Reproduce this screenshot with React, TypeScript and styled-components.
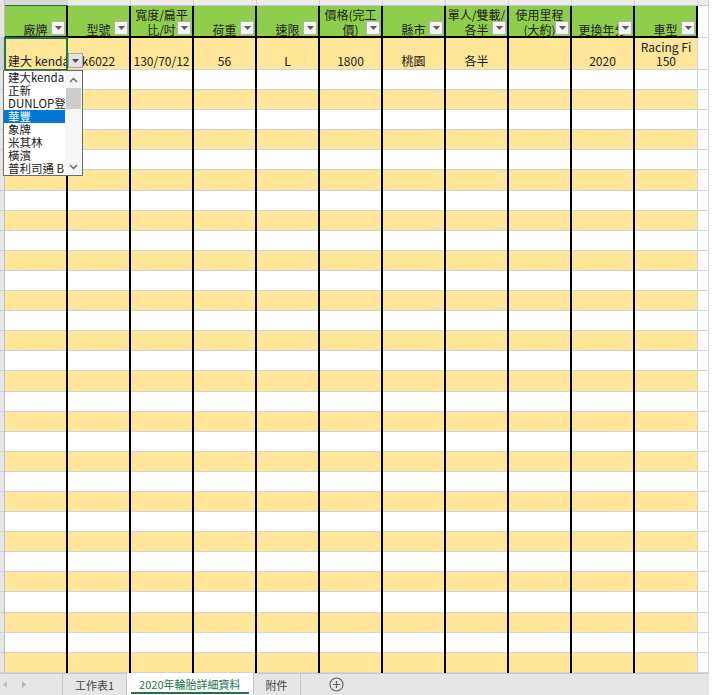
import React from "react";
import styled, { createGlobalStyle } from "styled-components";

const GlobalStyle = createGlobalStyle`
  html, body {
    margin: 0;
    padding: 0;
    background: #ffffff;
  }
  body {
    font-family: "Noto Sans CJK TC", "Liberation Sans", sans-serif;
    font-size: 12px;
    color: #1a1a1a;
  }
`;

const GREEN = "#8fce4c";
const YELLOW = "#ffe699";
const GRID = "#d4d4d4";

const Sheet = styled.div`
  width: 709px;
  height: 695px;
  display: flex;
  flex-direction: column;
  overflow: hidden;
`;

const Grid = styled.div`
  flex: 1;
  overflow: hidden;
  display: flex;
  flex-direction: column;
`;

const Row = styled.div<{ $h: number }>`
  display: flex;
  flex: none;
  height: ${(p) => p.$h}px;
`;

const RowHead = styled.div<{ $active?: boolean }>`
  flex: none;
  width: 5px;
  box-sizing: border-box;
  background: ${(p) => (p.$active ? "#d3d3d3" : "#e6e6e6")};
  border-right: 1px solid ${(p) => (p.$active ? "#217346" : "#c2c2c2")};
  box-shadow: inset 0 -1px 0 #d0d0d0;
`;

const ColHead = styled.div<{ $active?: boolean; $w?: number }>`
  flex: none;
  width: ${(p) => p.$w ?? 63}px;
  box-sizing: border-box;
  background: ${(p) => (p.$active ? "#d8d8d8" : "#ececec")};
  border-right: 1px solid #d2d2d2;
  border-bottom: 1px solid ${(p) => (p.$active ? "#217346" : "#c6c6c6")};
`;

const HeadCell = styled.div`
  flex: none;
  position: relative;
  width: 63px;
  box-sizing: border-box;
  background: ${GREEN};
  border-right: 2px solid #000;
  border-bottom: 2px solid #000;
  display: flex;
  flex-direction: column;
  justify-content: flex-end;
  align-items: center;
  overflow: hidden;
  line-height: 15px;
  text-align: center;
  white-space: nowrap;
  color: #1c1c1c;
`;

const HeadLine = styled.span`
  display: block;

  &:nth-last-child(2) {
    margin-bottom: -1px;
  }
`;

const FilterButton = styled.div`
  position: absolute;
  right: 1px;
  bottom: 1px;
  width: 14px;
  height: 14px;
  box-sizing: border-box;
  background: #f4f4f4;
  border: 1px solid #b4b4b4;
  display: flex;
  align-items: center;
  justify-content: center;
`;

const DataCell = styled.div<{ $fill: string; $last?: boolean; $align?: string; $sel?: boolean }>`
  flex: none;
  position: relative;
  width: 63px;
  box-sizing: border-box;
  background: ${(p) => p.$fill};
  border-right: ${(p) => (p.$last ? `1px solid ${GRID}` : "2px solid #000")};
  box-shadow: inset 0 -1px 0 ${GRID};
  display: flex;
  flex-direction: column;
  justify-content: flex-end;
  align-items: ${(p) => (p.$align === "left" ? "flex-start" : "center")};
  padding: 0 0 2px ${(p) => (p.$align === "left" ? "3px" : "0")};
  line-height: 14px;
  white-space: nowrap;
  z-index: ${(p) => (p.$sel ? 5 : "auto")};

  ${(p) =>
    p.$sel &&
    `
    &::after {
      content: "";
      position: absolute;
      left: -1px;
      top: -1px;
      right: -2px;
      bottom: -1px;
      border: 2px solid #217346;
      pointer-events: none;
    }
  `}
`;

const SpareCell = styled.div`
  flex: none;
  width: 11px;
  box-sizing: border-box;
  background: #fff;
  border-right: 1px solid ${GRID};
  box-shadow: inset 0 -1px 0 ${GRID};
`;

const CellButton = styled.div`
  position: absolute;
  left: 63px;
  top: 15px;
  width: 15px;
  height: 15px;
  box-sizing: border-box;
  background: #e3e3e3;
  border: 1px solid #a9a9a9;
  display: flex;
  align-items: center;
  justify-content: center;
  z-index: 6;
`;

const ListBox = styled.div`
  position: absolute;
  left: -2px;
  top: 32px;
  width: 80px;
  height: 106px;
  box-sizing: border-box;
  background: #fff;
  border: 1px solid #6b6b6b;
  display: flex;
  z-index: 7;
`;

const ListItems = styled.div`
  flex: 1;
  min-width: 0;
  display: flex;
  flex-direction: column;
`;

const ListItem = styled.div<{ $on?: boolean }>`
  height: 13px;
  line-height: 13px;
  font-size: 11.5px;
  padding-left: 4px;
  white-space: nowrap;
  overflow: hidden;
  color: ${(p) => (p.$on ? "#ffffff" : "#1a1a1a")};
  background: ${(p) => (p.$on ? "#0078d7" : "transparent")};
`;

const ScrollBar = styled.div`
  flex: none;
  width: 17px;
  display: flex;
  flex-direction: column;
  align-items: center;
  background: #f7f7f7;
`;

const ScrollArrow = styled.div`
  height: 17px;
  display: flex;
  align-items: center;
  justify-content: center;
`;

const ScrollThumb = styled.div`
  width: 15px;
  height: 21px;
  background: #cdcdcd;
`;

const ScrollTrack = styled.div`
  flex: 1;
`;

const TabBar = styled.div`
  flex: none;
  height: 22px;
  box-sizing: border-box;
  background: #e6e6e6;
  border-top: 1px solid #c8c8c8;
  display: flex;
  align-items: stretch;
  font-size: 11px;
`;

const TabNav = styled.div`
  flex: none;
  width: 63px;
  box-sizing: border-box;
  border-right: 1px solid #c6c6c6;
  display: flex;
  align-items: center;
  gap: 15px;
  padding-left: 3px;
`;

const Tab = styled.div<{ $active?: boolean }>`
  flex: none;
  position: relative;
  box-sizing: border-box;
  padding: 0 12px;
  display: flex;
  align-items: center;
  color: ${(p) => (p.$active ? "#217346" : "#444444")};
  background: ${(p) => (p.$active ? "#ffffff" : "transparent")};
  border-right: 1px solid #c6c6c6;
  margin-top: ${(p) => (p.$active ? "-1px" : "0")};

  ${(p) =>
    p.$active &&
    `
    &::after {
      content: "";
      position: absolute;
      left: 4px;
      right: 4px;
      bottom: 1px;
      height: 2px;
      background: #217346;
    }
  `}
`;

const AddSheet = styled.div`
  margin-left: 28px;
  display: flex;
  align-items: center;
`;

const Caret = ({ color = "#5a5a5a" }: { color?: string }) => (
  <svg width="7" height="4" viewBox="0 0 7 4">
    <path d="M0 0h7L3.5 4z" fill={color} />
  </svg>
);

const Chevron = ({ up }: { up?: boolean }) => (
  <svg width="9" height="6" viewBox="0 0 9 6">
    <path
      d={up ? "M1 5l3.5-3.5L8 5" : "M1 1l3.5 3.5L8 1"}
      fill="none"
      stroke="#5e5e5e"
      strokeWidth="1.3"
    />
  </svg>
);

const headers: string[][] = [
  ["廠牌"],
  ["型號"],
  ["寬度/扁平", "比/吋"],
  ["荷重"],
  ["速限"],
  ["價格(完工", "價)"],
  ["縣市"],
  ["單人/雙載/", "各半"],
  ["使用里程", "(大約)"],
  ["更換年分"],
  ["車型"],
];

const firstRow: string[][] = [
  ["建大 kenda"],
  ["k6022"],
  ["130/70/12"],
  ["56"],
  ["L"],
  ["1800"],
  ["桃園"],
  ["各半"],
  [],
  ["2020"],
  ["Racing Fi", "150"],
];

const brands = ["建大kenda", "正新", "DUNLOP登祿普", "華豐", "象牌", "米其林", "橫濱", "普利司通 BRIDGESTONE"];

const ROWS = 31;

export default function App() {
  return (
    <>
      <GlobalStyle />
      <Sheet>
        <Grid>
          <Row $h={6}>
            <RowHead />
            {headers.map((_, i) => (
              <ColHead key={i} $active={i === 0} />
            ))}
            <ColHead $w={11} />
          </Row>

          <Row $h={32}>
            <RowHead />
            {headers.map((lines, i) => (
              <HeadCell key={i}>
                {lines.map((l) => (
                  <HeadLine key={l}>{l}</HeadLine>
                ))}
                <FilterButton>
                  <Caret />
                </FilterButton>
              </HeadCell>
            ))}
            <SpareCell />
          </Row>

          <Row $h={32}>
            <RowHead $active />
            {firstRow.map((lines, i) => (
              <DataCell
                key={i}
                $fill={YELLOW}
                $last={i === 10}
                $align={i === 0 ? "left" : "center"}
                $sel={i === 0}
              >
                {lines.map((l) => (
                  <span key={l}>{l}</span>
                ))}
                {i === 0 && (
                  <>
                    <CellButton>
                      <Caret color="#4a4a4a" />
                    </CellButton>
                    <ListBox>
                      <ListItems>
                        {brands.map((b) => (
                          <ListItem key={b} $on={b === "華豐"}>
                            {b}
                          </ListItem>
                        ))}
                      </ListItems>
                      <ScrollBar>
                        <ScrollArrow>
                          <Chevron up />
                        </ScrollArrow>
                        <ScrollThumb />
                        <ScrollTrack />
                        <ScrollArrow>
                          <Chevron />
                        </ScrollArrow>
                      </ScrollBar>
                    </ListBox>
                  </>
                )}
              </DataCell>
            ))}
            <SpareCell />
          </Row>

          {Array.from({ length: ROWS }).map((_, r) => (
            <Row key={r} $h={20.1}>
              <RowHead />
              {headers.map((_, i) => (
                <DataCell key={i} $fill={r % 2 === 1 ? YELLOW : "#ffffff"} $last={i === 10} />
              ))}
              <SpareCell />
            </Row>
          ))}
        </Grid>

        <TabBar>
          <TabNav>
            <svg width="4" height="7" viewBox="0 0 4 7">
              <path d="M4 0v7L0 3.5z" fill="#c4c4c4" />
            </svg>
            <svg width="4" height="7" viewBox="0 0 4 7">
              <path d="M0 0v7L4 3.5z" fill="#b8b8b8" />
            </svg>
          </TabNav>
          <Tab>工作表1</Tab>
          <Tab $active>2020年輪胎詳細資料</Tab>
          <Tab>附件</Tab>
          <AddSheet>
            <svg width="15" height="15" viewBox="0 0 15 15">
              <circle cx="7.5" cy="7.5" r="6.5" fill="none" stroke="#5f5f5f" strokeWidth="1.1" />
              <path d="M7.5 4v7M4 7.5h7" stroke="#5f5f5f" strokeWidth="1.2" />
            </svg>
          </AddSheet>
        </TabBar>
      </Sheet>
    </>
  );
}
